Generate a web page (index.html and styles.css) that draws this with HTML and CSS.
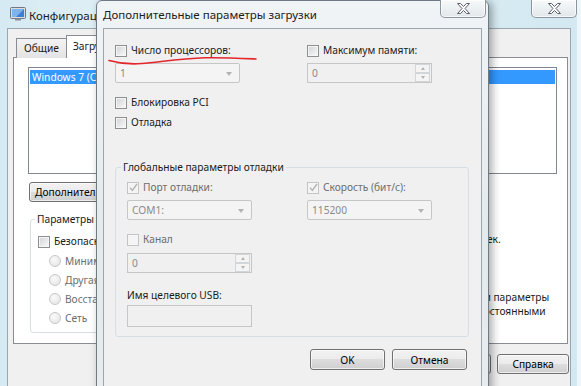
FILE: index.html
```html
<!DOCTYPE html>
<html lang="ru">
<head>
  <meta charset="UTF-8">
  <title>Дополнительные параметры загрузки</title>
  <link rel="stylesheet" href="styles.css">
</head>
<body>
<div class="desktop">

  <!-- Окно "Конфигурация системы" на заднем плане -->
  <div class="window back">
    <div class="titlebar">
      <svg class="app-icon" width="16" height="16" viewBox="0 0 16 16">
        <rect x="0.5" y="1.5" width="15" height="11" rx="1" fill="#d9dde2" stroke="#6f7780"/>
        <rect x="2" y="3" width="12" height="8" fill="#3f7fd1"/>
        <path d="M2 3h12l-8 8H2z" fill="#7fb3ec"/>
        <rect x="5" y="12.5" width="6" height="2" fill="#8a9098"/>
      </svg>
      <span class="title">Конфигурация системы</span>
      <span class="close-btn">
        <svg width="13" height="11" viewBox="0 0 13 11"><path d="M0.5 0.5h3l3 3 3-3h3l-4.5 5 4.5 5h-3l-3-3-3 3h-3l4.5-5z" fill="#fff" stroke="#5b6068"/></svg>
      </span>
    </div>
    <div class="client">
      <div class="tabs">
        <span class="tab">Общие</span>
        <span class="tab active">Загрузка</span>
        <span class="tab">Службы</span>
        <span class="tab">Автозагрузка</span>
        <span class="tab">Сервис</span>
      </div>
      <div class="tab-panel">
        <div class="listbox">
          <div class="list-item selected">Windows 7 (C:\Windows) : Текущая ОС; ОС по умолчанию</div>
        </div>
        <div class="panel-buttons">
          <button class="btn wide">Дополнительные параметры...</button>
          <button class="btn wide">Использовать по умолчанию</button>
          <button class="btn">Удалить</button>
        </div>
        <div class="boot-row">
          <fieldset class="group boot-options">
            <legend>Параметры загрузки</legend>
            <div class="boot-cols">
              <div class="col">
                <label class="cb-row"><span class="cb"></span>Безопасный режим</label>
                <div class="radio-row"><span class="radio"></span>Минимальная</div>
                <div class="radio-row"><span class="radio"></span>Другая оболочка</div>
                <div class="radio-row"><span class="radio"></span>Восстановление Active Directory</div>
                <div class="radio-row"><span class="radio"></span>Сеть</div>
              </div>
              <div class="col">
                <label class="cb-row"><span class="cb"></span>Без GUI</label>
                <label class="cb-row"><span class="cb"></span>Журнал загрузки</label>
                <label class="cb-row"><span class="cb"></span>Базовое видео</label>
                <label class="cb-row"><span class="cb"></span>Информация об ОС</label>
              </div>
            </div>
          </fieldset>
          <div class="boot-side">
            <div class="side-label">Таймаут:</div>
            <div class="timeout-row"><span class="textbox timeout">30</span><span>сек.</span></div>
            <label class="cb-row two-lines"><span class="cb"></span><span>Сделать эти параметры<br>загрузки постоянными</span></label>
          </div>
        </div>
      </div>
      <div class="button-row back-buttons">
        <button class="btn">OK</button>
        <button class="btn">Отмена</button>
        <button class="btn">Применить</button>
        <button class="btn">Справка</button>
      </div>
    </div>
  </div>

  <!-- Диалог "Дополнительные параметры загрузки" -->
  <div class="window dialog">
    <div class="titlebar">
      <span class="title">Дополнительные параметры загрузки</span>
      <span class="close-btn">
        <svg width="13" height="11" viewBox="0 0 13 11"><path d="M0.5 0.5h3l3 3 3-3h3l-4.5 5 4.5 5h-3l-3-3-3 3h-3l4.5-5z" fill="#fff" stroke="#5b6068"/></svg>
      </span>
    </div>
    <div class="client">
      <div class="two-cols">
        <div class="col">
          <label class="cb-row"><span class="cb"></span>Число процессоров:</label>
          <div class="combo disabled">1<span class="arrow"></span></div>
        </div>
        <div class="col">
          <label class="cb-row"><span class="cb"></span>Максимум памяти:</label>
          <div class="spin disabled">0<span class="spin-btns"><span class="up"></span><span class="down"></span></span></div>
        </div>
      </div>
      <label class="cb-row pci"><span class="cb"></span>Блокировка PCI</label>
      <label class="cb-row debug"><span class="cb"></span>Отладка</label>

      <fieldset class="group debug-group">
        <legend>Глобальные параметры отладки</legend>
        <div class="two-cols inner">
          <div class="col">
            <label class="cb-row gray"><span class="cb off"><svg viewBox="0 0 9 9"><path d="M1 4.8l2.4 2.6L8 1" fill="none" stroke="#b5b5b5" stroke-width="1.5"/></svg></span>Порт отладки:</label>
            <div class="combo disabled">COM1:<span class="arrow"></span></div>
            <label class="cb-row gray kanal"><span class="cb off"></span>Канал</label>
            <div class="spin disabled">0<span class="spin-btns"><span class="up"></span><span class="down"></span></span></div>
            <div class="field-label">Имя целевого USB:</div>
            <div class="textbox usb"></div>
          </div>
          <div class="col">
            <label class="cb-row gray"><span class="cb off"><svg viewBox="0 0 9 9"><path d="M1 4.8l2.4 2.6L8 1" fill="none" stroke="#b5b5b5" stroke-width="1.5"/></svg></span>Скорость (бит/с):</label>
            <div class="combo disabled">115200<span class="arrow"></span></div>
          </div>
        </div>
      </fieldset>

      <div class="button-row dialog-buttons">
        <button class="btn">OK</button>
        <button class="btn">Отмена</button>
      </div>
    </div>
  </div>

  <!-- красная пометка поверх окна -->
  <svg class="markup" width="581" height="386" viewBox="0 0 581 386">
    <path d="M109 60.5C118 63 130 64.5 142 63.5C160 62 180 58.5 205 57.8C225 57.5 245 58.5 256 59" fill="none" stroke="#e3262b" stroke-width="1.6" stroke-linecap="round"/>
  </svg>
</div>
</body>
</html>
```

FILE: styles.css
```css
* {
  box-sizing: border-box;
}

body {
  margin: 0;
  font-family: "Noto Sans", "Segoe UI", Arial, sans-serif;
  font-size: 10.2px;
  color: #1b1b1b;
  overflow: hidden;
}

.desktop {
  position: relative;
  width: 581px;
  height: 386px;
  overflow: hidden;
  background: #eef6fa;
}

/* Окна */
.window {
  position: absolute;
  top: 0;
  display: flex;
  flex-direction: column;
}

.titlebar {
  display: flex;
  align-items: center;
  flex: none;
}

.title {
  flex: 1;
  font-size: 11.5px;
  white-space: nowrap;
  overflow: hidden;
}

.close-btn {
  align-self: flex-start;
  width: 46px;
  height: 18px;
  display: flex;
  align-items: center;
  justify-content: center;
  border: 1px solid #8b959d;
  border-top: none;
  border-radius: 0 0 5px 5px;
  background: linear-gradient(#f7f9fa, #e2e7ea);
  box-shadow: inset 0 0 0 1px rgba(255, 255, 255, 0.7);
}

.client {
  flex: 1;
  background: #f0f0f0;
  border: 1px solid #9aa7b1;
}

/* Окно на заднем плане */
.back {
  z-index: 0;
  left: 0;
  width: 577px;
  height: 420px;
  background: linear-gradient(90deg, #d6eaf3 0%, #e6f2f7 30%, #dcedf4 70%, #d3e8f1 100%);
}

.back .titlebar {
  height: 28px;
}

.app-icon {
  margin: 0 3px 0 10px;
  flex: none;
}

.back .title {
  padding-top: 2px;
}

.back .client {
  margin: 0 6px 0 7px;
  padding: 6px 2px 0 5px;
}

.tabs {
  display: flex;
  align-items: flex-end;
  padding-left: 3px;
  margin-bottom: -1px;
}

.tab {
  height: 20px;
  line-height: 17px;
  padding: 1px 7px 0;
  border: 1px solid #898c95;
  border-bottom: none;
  background: linear-gradient(#f3f3f3, #e3e3e3);
  white-space: nowrap;
}

.tab + .tab {
  margin-left: -1px;
}

.tab.active {
  position: relative;
  z-index: 1;
  height: 23px;
  padding-top: 2px;
  padding-left: 6px;
  background: #fff;
}

.tab-panel {
  border: 1px solid #898c95;
  background: #fff;
  padding: 9px 10px 10px 14px;
}

.listbox {
  height: 107px;
  border: 1px solid #828790;
  padding: 2px 1px;
}

.list-item {
  height: 14px;
  line-height: 14px;
  padding-left: 2px;
  white-space: nowrap;
  overflow: hidden;
}

.list-item.selected {
  background: #3399ff;
  color: #fff;
}

.panel-buttons {
  display: flex;
  gap: 7px;
  margin: 8px 0 0 1px;
}

.btn {
  height: 21px;
  width: 75px;
  padding: 0;
  border: 1px solid #707070;
  border-radius: 3px;
  background: linear-gradient(#f2f2f2 0%, #ebebeb 50%, #dddddd 50%, #cfcfcf 100%);
  box-shadow: inset 0 0 0 1px rgba(255, 255, 255, 0.65);
  font: inherit;
  color: #000;
  white-space: nowrap;
}

.panel-buttons .btn {
  height: 20px;
}

.btn.wide {
  width: 160px;
  text-align: left;
  padding-left: 5px;
}

.boot-row {
  display: flex;
  gap: 8px;
  margin-top: 10px;
}

.group {
  margin: 0;
  border: 1px solid #d5dfe5;
  border-radius: 3px;
  min-inline-size: 0;
}

.group legend {
  padding: 0 2px;
  line-height: 15px;
}

.boot-options {
  width: 377px;
  margin-left: 2px;
  padding: 7px 7px 7px 7px;
}

.boot-options legend {
  margin-left: -3px;
}

.boot-cols {
  display: grid;
  grid-template-columns: 215px 1fr;
}

.col {
  display: flex;
  flex-direction: column;
  align-items: flex-start;
}

.cb-row {
  display: flex;
  align-items: center;
  height: 15px;
  line-height: 15px;
  white-space: nowrap;
}

.cb {
  flex: none;
  width: 12px;
  height: 12px;
  margin-right: 4px;
  border: 1px solid #8e8f8f;
  background: linear-gradient(135deg, #cfd2d6 0%, #f1f1f2 75%, #fbfbfb 100%);
  box-shadow: inset 0 0 0 1px #f6f6f6;
  display: flex;
  align-items: center;
  justify-content: center;
}

.cb.off {
  border-color: #c4c4c4;
  background: #f4f4f4;
}

.cb svg {
  width: 9px;
  height: 9px;
}

.gray {
  color: #6d6d6d;
}

.boot-options .col .cb-row + .cb-row {
  margin-top: 4px;
}

.radio-row {
  display: flex;
  align-items: center;
  height: 15px;
  margin: 4px 0 0 11px;
  color: #6d6d6d;
  white-space: nowrap;
}

.radio {
  width: 12px;
  height: 12px;
  margin-right: 4px;
  border: 1px solid #c8c8c8;
  border-radius: 50%;
  background: radial-gradient(circle at 40% 35%, #fafafa, #e2e2e2);
}

.boot-side {
  display: flex;
  flex-direction: column;
  align-items: flex-start;
}

.side-label {
  line-height: 15px;
}

.timeout-row {
  display: flex;
  align-items: center;
  gap: 4px;
  margin-top: 2px;
}

.textbox {
  border: 1px solid #abadb3;
  background: #fff;
  padding-left: 3px;
}

.timeout {
  width: 63px;
  height: 20px;
  line-height: 18px;
}

.two-lines {
  height: auto;
  align-items: flex-start;
  margin-top: 41px;
  line-height: 14px;
}

.two-lines .cb {
  margin: 1px 5px 0 0;
}

.button-row {
  display: flex;
  justify-content: flex-end;
}

.back-buttons {
  gap: 6px;
  margin: 10px -1px 0 0;
}

.back-buttons .btn {
  width: 72px;
  height: 20px;
}

/* Диалог */
.dialog {
  z-index: 1;
  left: 96px;
  width: 393px;
  height: 400px;
  border: 1px solid #6e7b86;
  border-radius: 6px 6px 0 0;
  background: linear-gradient(#f1f4f6, #e4e9ec 60%, #e8ecef);
  box-shadow: 3px 1px 9px rgba(0, 0, 0, 0.35);
}

.dialog .titlebar {
  height: 27px;
}

.dialog .title {
  padding: 0 0 0 6px;
}

.dialog .close-btn {
  margin: -1px 2px 0 0;
}

.dialog .client {
  margin: 0 6px;
  padding: 14px 12px 0 11px;
}

.two-cols {
  display: grid;
  grid-template-columns: 192px 1fr;
}

.combo,
.spin {
  position: relative;
  width: 125px;
  height: 20px;
  line-height: 18px;
  padding-left: 4px;
  margin-top: 5px;
}

.combo.disabled {
  border: 1px solid #c6c6c6;
  border-radius: 2px;
  background: #f4f4f4;
  color: #8a8a8a;
}

.arrow {
  position: absolute;
  right: 7px;
  top: 8px;
  border-left: 3.5px solid transparent;
  border-right: 3.5px solid transparent;
  border-top: 4px solid #b3b3b3;
}

.spin.disabled {
  border: 1px solid #c6c6c6;
  background: #f0f0f0;
  color: #8a8a8a;
}

.spin-btns {
  position: absolute;
  right: 1px;
  top: 0;
  bottom: 0;
  width: 15px;
  display: flex;
  flex-direction: column;
}

.spin-btns span {
  flex: 1;
  border: 1px solid #d2d6d9;
  background: #f4f4f4;
  display: flex;
  align-items: center;
  justify-content: center;
}

.spin-btns .up::after {
  content: "";
  border-left: 2.5px solid transparent;
  border-right: 2.5px solid transparent;
  border-bottom: 3px solid #b3b3b3;
}

.spin-btns .down::after {
  content: "";
  border-left: 2.5px solid transparent;
  border-right: 2.5px solid transparent;
  border-top: 3px solid #b3b3b3;
}

.pci {
  margin-top: 12px;
}

.debug {
  margin-top: 5px;
}

.debug-group {
  width: 354px;
  margin-top: 30px;
  padding: 5px 11px 9px 11px;
}

.debug-group legend {
  margin-left: -6px;
}

.inner {
  grid-template-columns: 180px 1fr;
}

.kanal {
  margin-top: 12px;
}

.inner .spin {
  margin-top: 6px;
}

.field-label {
  margin-top: 15px;
  line-height: 15px;
}

.usb {
  width: 125px;
  height: 22px;
  margin-top: 2px;
  border-color: #c6c6c6;
  background: #f0f0f0;
}

.dialog-buttons {
  gap: 7px;
  margin: 12px 2px 0 0;
}

.markup {
  position: absolute;
  z-index: 2;
  left: 0;
  top: 0;
  pointer-events: none;
}
```
